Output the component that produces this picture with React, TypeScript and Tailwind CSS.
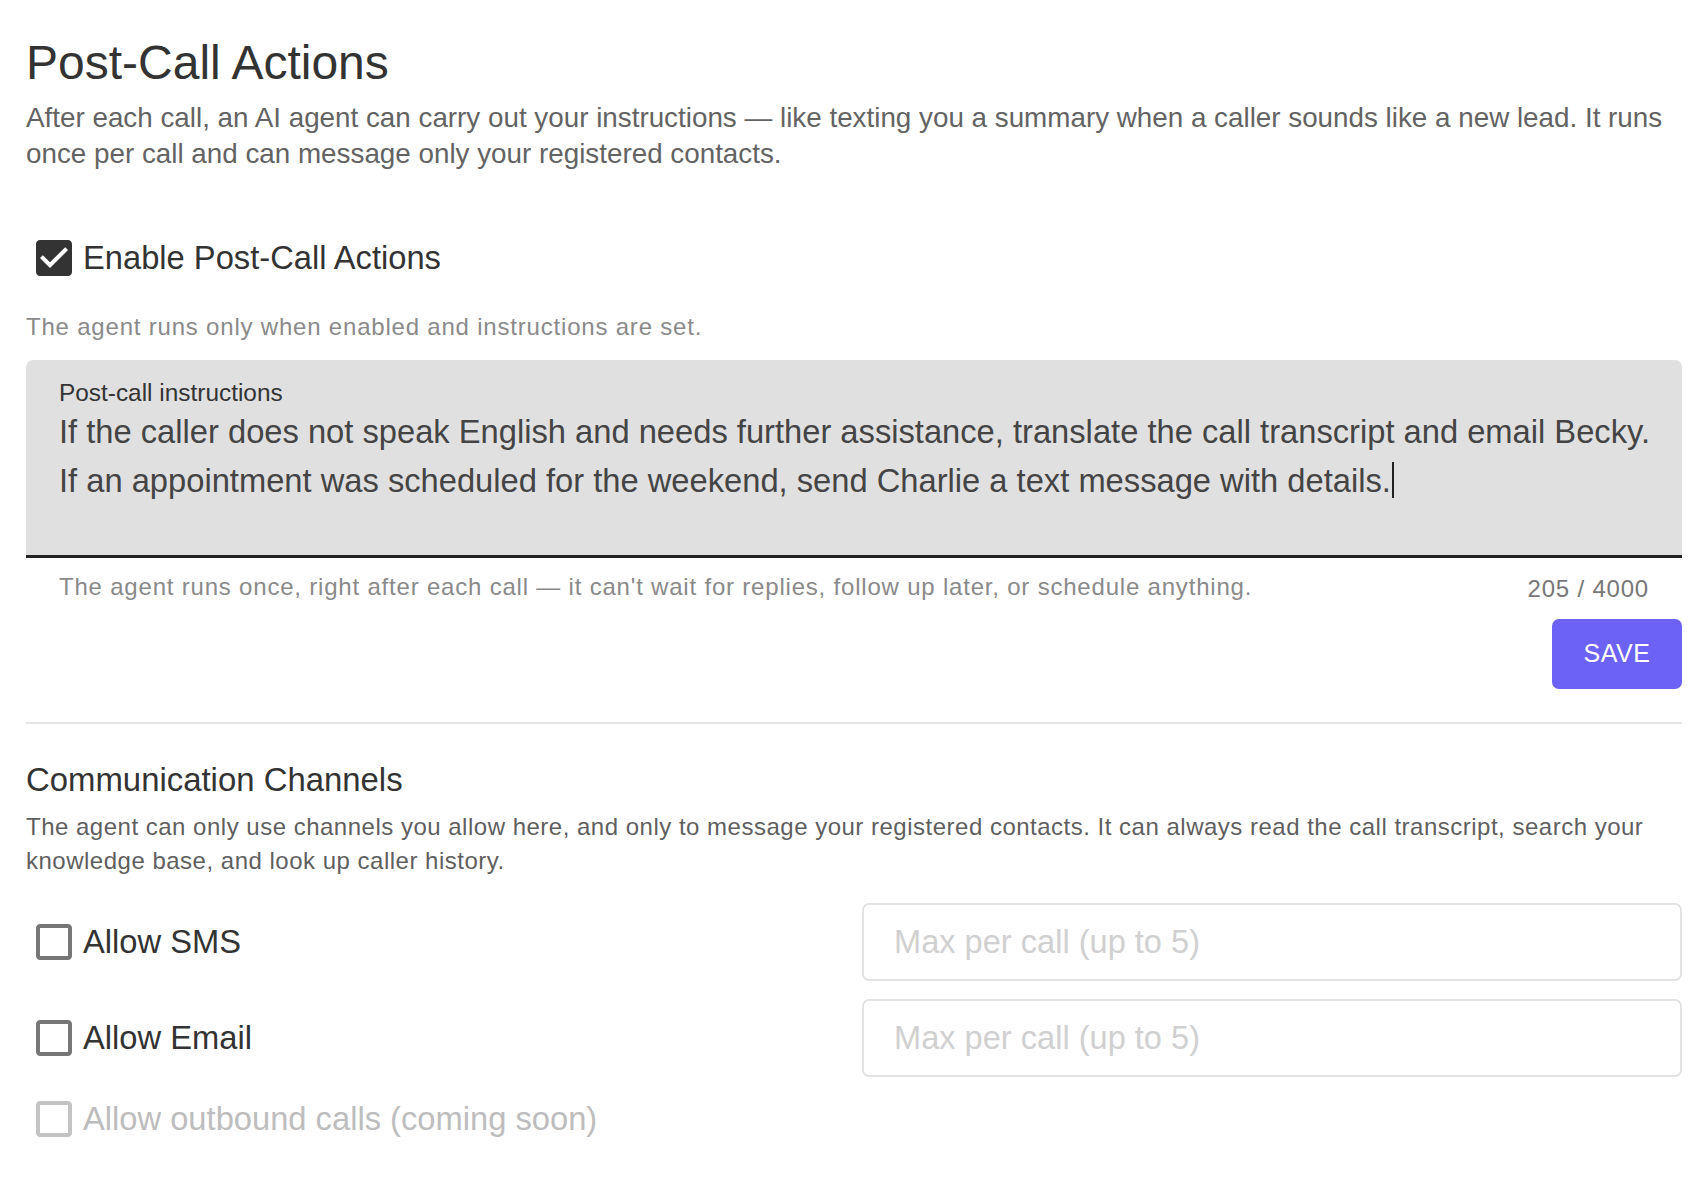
import { useState } from "react";

// Material-style checkbox glyphs (24 unit grid, box spans 3..21)
const CHECKED =
  "M19 3H5c-1.11 0-2 .9-2 2v14c0 1.1.89 2 2 2h14c1.11 0 2-.9 2-2V5c0-1.1-.89-2-2-2zm-9 14l-5-5 1.41-1.41L10 14.17l7.59-7.59L19 8l-9 9z";
const BLANK =
  "M19 5v14H5V5h14m0-2H5c-1.1 0-2 .9-2 2v14c0 1.1.9 2 2 2h14c1.1 0 2-.9 2-2V5c0-1.1-.9-2-2-2z";

function Check({
  label,
  checked,
  disabled,
  onToggle,
}: {
  label: string;
  checked?: boolean;
  disabled?: boolean;
  onToggle?: () => void;
}) {
  const color = checked ? "#333333" : disabled ? "#c4c4c4" : "#777777";
  return (
    <label
      className={`flex items-center gap-[5px] pl-[4px] ${disabled ? "cursor-default" : "cursor-pointer"}`}
      onClick={disabled ? undefined : onToggle}
    >
      <svg viewBox="0 0 24 24" className="h-[48px] w-[48px] shrink-0">
        <path d={checked ? CHECKED : BLANK} fill={color} />
      </svg>
      <span className={`text-[32.7px] leading-[40px] ${disabled ? "text-[#bdbdbd]" : "text-[#333333]"}`}>{label}</span>
    </label>
  );
}

function MaxInput() {
  return (
    <input
      placeholder="Max per call (up to 5)"
      className="h-[78px] w-full rounded-[7px] border-2 border-[#e2e2e2] bg-white px-[30px] text-[32.6px] text-[#333] outline-none placeholder:text-[#d0d0d0]"
    />
  );
}

export default function App() {
  const [enabled, setEnabled] = useState(true);
  const [sms, setSms] = useState(false);
  const [email, setEmail] = useState(false);

  return (
    <div className="min-h-screen bg-white pl-[26px] pr-[26px] pt-[35px] font-['Liberation_Sans',Arial,sans-serif]">
      <h1 className="text-[48px] leading-[56px] text-[#333333]">Post-Call Actions</h1>
      <p className="mt-[9px] text-[27.8px] leading-[36px] text-[#636363]">
        After each call, an AI agent can carry out your instructions — like texting you a summary when a caller sounds
        like a new lead. It runs once per call and can message only your registered contacts.
      </p>

      <div className="mt-[62px]">
        <Check label="Enable Post-Call Actions" checked={enabled} onToggle={() => setEnabled((v) => !v)} />
      </div>

      <p className="mt-[29px] text-[24px] leading-[32px] tracking-[0.8px] text-[#8a8a8a]">
        The agent runs only when enabled and instructions are set.
      </p>

      {/* Instructions field */}
      <div className="mt-[17px] h-[198px] overflow-hidden rounded-t-[7px] border-b-[3px] border-[#222222] bg-[#e0e0e0] pl-[33px] pr-[20px] pt-[19px]">
        <div className="text-[24.4px] leading-[28px] text-[#333333]">Post-call instructions</div>
        <div className="mt-[1px] whitespace-nowrap text-[32.7px] leading-[48px] text-[#444444]">
          <div>
            If the caller does not speak English and needs further assistance, translate the call transcript and email
            Becky.
          </div>
          <div>
            If an appointment was scheduled for the weekend, send Charlie a text message with details.
            <span className="ml-[1px] inline-block h-[36px] w-[2px] translate-y-[6px] bg-[#222]" />
          </div>
        </div>
      </div>

      <div className="flex items-start justify-between px-[33px] pt-[13px]">
        <span className="text-[24px] leading-[32px] tracking-[0.8px] text-[#8a8a8a]">
          The agent runs once, right after each call — it can't wait for replies, follow up later, or schedule anything.
        </span>
        <span className="mt-[2px] text-[24px] leading-[32px] tracking-[0.8px] text-[#777777]">205 / 4000</span>
      </div>

      <div className="mt-[14px] flex justify-end">
        <button className="h-[70px] w-[130px] rounded-[7px] bg-[#6c63f6] text-[25px] tracking-[0.6px] text-white">
          SAVE
        </button>
      </div>

      <div className="mt-[33px] h-[2px] bg-[#e6e6e6]" />

      <h2 className="mt-[36px] text-[32.9px] leading-[40px] text-[#333333]">Communication Channels</h2>
      <p className="mt-[10px] text-[24px] leading-[34px] tracking-[0.5px] text-[#5f5f5f]">
        The agent can only use channels you allow here, and only to message your registered contacts. It can always
        read the call transcript, search your knowledge base, and look up caller history.
      </p>

      <div className="mt-[25px] grid grid-cols-2 gap-x-[16px] gap-y-[18px] pb-[40px]">
        <div className="flex items-center">
          <Check label="Allow SMS" checked={sms} onToggle={() => setSms((v) => !v)} />
        </div>
        <MaxInput />
        <div className="flex items-center">
          <Check label="Allow Email" checked={email} onToggle={() => setEmail((v) => !v)} />
        </div>
        <MaxInput />
        <div className="flex h-[48px] items-center">
          <Check label="Allow outbound calls (coming soon)" disabled />
        </div>
      </div>
    </div>
  );
}
